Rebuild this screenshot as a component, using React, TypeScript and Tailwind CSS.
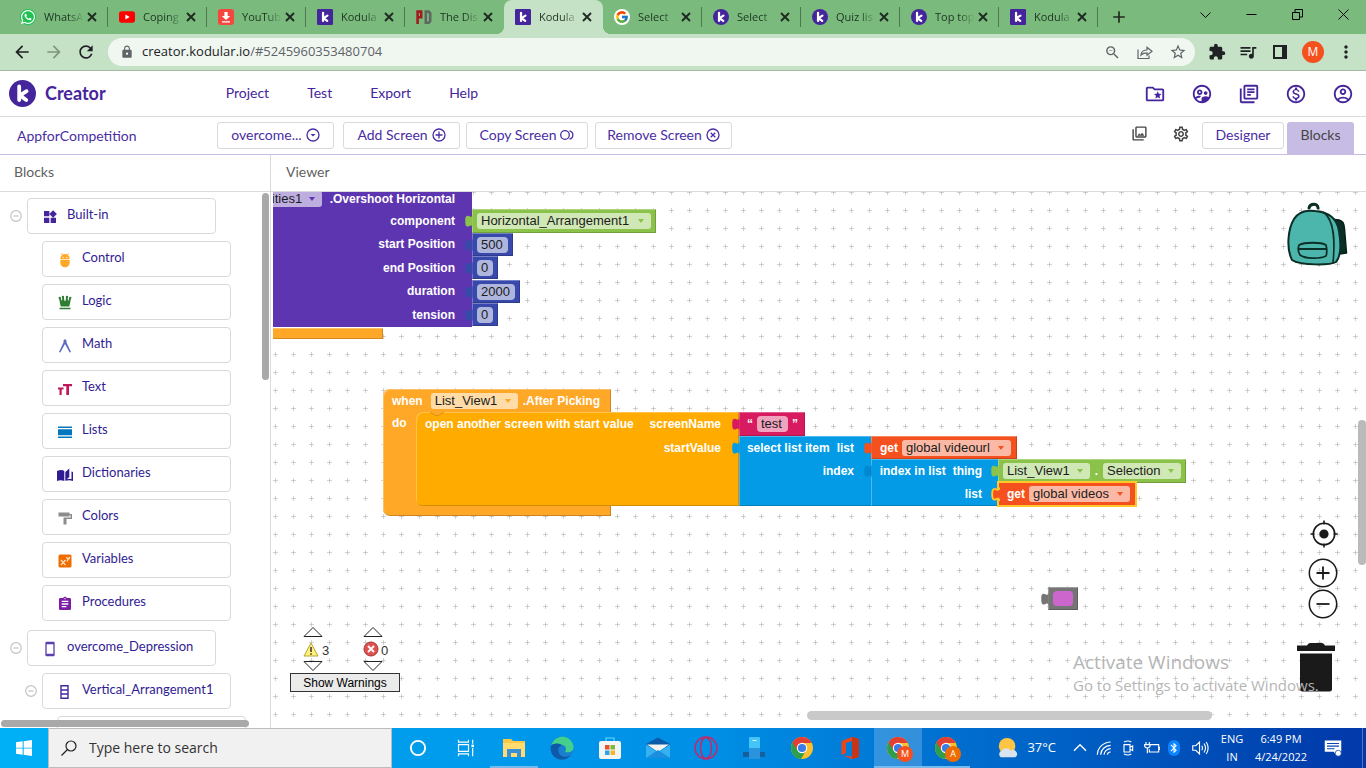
import type { ReactNode } from "react";
import {
  MdAdb,
  MdAdd,
  MdArrowBack,
  MdArrowForward,
  MdAssignment,
  MdExtension,
  MdLock,
  MdMoreVert,
  MdOutlineAccountCircle,
  MdOutlineCollections,
  MdOutlineFolderSpecial,
  MdOutlineLibraryBooks,
  MdOutlineMonetizationOn,
  MdOutlineSettings,
  MdOutlineSupervisedUserCircle,
  MdQueueMusic,
  MdRefresh,
  MdSmartphone,
  MdStarBorder,
  MdWidgets,
  MdZoomOut,
  MdBluetooth,
} from "react-icons/md";
import { FaWhatsapp } from "react-icons/fa";
import { FcGoogle } from "react-icons/fc";

/* ---------- browser chrome ---------- */

function KMark({ round = false, className = "size-4" }: { round?: boolean; className?: string }) {
  return (
    <svg viewBox="0 0 27 27" className={className} aria-hidden="true">
      <rect width="27" height="27" rx={round ? 13.5 : 2} fill="#45259c" />
      <path d="M10.2 6.5v13.6M17.6 11.2l-6.6 4.2 6.2 4.6" fill="none" stroke="#fff" strokeWidth="3.8" strokeLinecap="round" strokeLinejoin="round" />
    </svg>
  );
}

function WhatsappIcon() {
  return (
    <span className="flex size-4 items-center justify-center rounded-full bg-[#1fc152] text-white">
      <FaWhatsapp className="size-4" />
    </span>
  );
}

function YoutubeIcon() {
  return (
    <svg viewBox="0 0 16 16" className="size-4" aria-hidden="true">
      <rect y="2.3" width="16" height="11.4" rx="2.6" fill="#f00" />
      <path d="M6.4 5.5v5l4.3-2.5z" fill="#fff" />
    </svg>
  );
}

function DownloadIcon() {
  return (
    <svg viewBox="0 0 16 16" className="size-4" aria-hidden="true">
      <rect width="16" height="16" rx="3" fill="#f4473f" />
      <path d="M6.4 3h3.2v4h2.6L8 11 3.8 7h2.6zM4 12.2h8v1.2H4z" fill="#fff" />
    </svg>
  );
}

function PdIcon() {
  return (
    <svg viewBox="0 0 16 16" className="size-4" fill="none" strokeWidth="2.6" aria-hidden="true">
      <path d="M1.6 15V2.6h3.6v5.6H2" stroke="#a31b1f" />
      <path d="M9.8 2.6h2.8l1.6 1.6v8l-1.6 1.6H9.8z" stroke="#5d6860" />
    </svg>
  );
}

function GoogleIcon() {
  return (
    <span className="flex size-4 items-center justify-center rounded-full bg-white">
      <FcGoogle className="size-[14px]" />
    </span>
  );
}

const tabs: { title: string; icon: ReactNode; active?: boolean; line?: boolean }[] = [
  { title: "WhatsA", icon: <WhatsappIcon />, line: true },
  { title: "Coping", icon: <YoutubeIcon />, line: true },
  { title: "YouTub", icon: <DownloadIcon />, line: true },
  { title: "Kodula", icon: <KMark />, line: true },
  { title: "The Dis", icon: <PdIcon /> },
  { title: "Kodula", icon: <KMark />, active: true },
  { title: "Select", icon: <GoogleIcon />, line: true },
  { title: "Select", icon: <KMark round />, line: true },
  { title: "Quiz lis", icon: <KMark round />, line: true },
  { title: "Top top", icon: <KMark round />, line: true },
  { title: "Kodula", icon: <KMark />, line: true },
];

function TabStrip() {
  return (
    <div className="flex h-[34px] shrink-0 bg-[#7abb7d] pl-[9px] font-['Open_Sans',sans-serif] text-[11px] text-[#1d3320]">
      {tabs.map((t, i) => (
        <div key={i} className={t.active ? "relative flex w-[99px] items-center rounded-t-lg bg-[#c5e1c6] pl-[11px]" : "relative flex w-[99px] items-center pl-[11px]"}>
          {t.active && (
            <>
              <span className="absolute bottom-0 -left-2 size-2 bg-[radial-gradient(circle_at_0_0,#7abb7d_8px,#c5e1c6_8px)]" />
              <span className="absolute -right-2 bottom-0 size-2 bg-[radial-gradient(circle_at_100%_0,#7abb7d_8px,#c5e1c6_8px)]" />
            </>
          )}
          {t.icon}
          <span className="ml-2 w-[40px] overflow-hidden whitespace-nowrap mask-r-from-60%">{t.title}</span>
          <button aria-label={`Close ${t.title}`} className="flex size-4 items-center justify-center text-[#1f2a20]">
            <svg viewBox="0 0 16 16" className="size-4" stroke="currentColor" strokeWidth="1.9" aria-hidden="true">
              <path d="M4 4l8 8M12 4l-8 8" />
            </svg>
          </button>
          {t.line && <span className="absolute top-[7px] right-0 h-5 w-px bg-[#4e7950]" />}
        </div>
      ))}
      <button aria-label="New tab" className="ml-[11px] text-[#1f2a20]">
        <MdAdd className="size-5" />
      </button>
      <div className="ml-auto flex h-[29px] text-black">
        <WinButton label="Search tabs" d="M.5 3.5l5 5 5-5" />
        <WinButton label="Minimize" d="M.5 5.5h10" />
        <WinButton label="Restore" d="M.5 3.500h7v7h-7zM3 3.500v-3h7.500v7.500H8" />
        <WinButton label="Close window" d="M.5.5l10 10M10.500.5l-10 10" />
      </div>
    </div>
  );
}

function WinButton({ label, d }: { label: string; d: string }) {
  return (
    <button aria-label={label} className="flex w-[46px] items-center justify-center">
      <svg viewBox="0 0 11 11" className="size-[11px]" fill="none" stroke="currentColor" aria-hidden="true">
        <path d={d} />
      </svg>
    </button>
  );
}

function AddressBar() {
  return (
    <div className="flex h-[37px] shrink-0 items-center border-b border-[#a3b8a4] bg-[#c5e1c6] pr-[10px] pl-3 text-[#202124]">
      <div className="flex w-24 items-center gap-3">
        <button aria-label="Back"><MdArrowBack className="size-5" /></button>
        <button aria-label="Forward" className="text-[#7f9580]"><MdArrowForward className="size-5" /></button>
        <button aria-label="Reload"><MdRefresh className="size-5" /></button>
      </div>
      <div className="flex h-7 flex-1 items-center rounded-full bg-[#f0f7f1] pr-2 pl-3 text-[#5f6368]">
        <MdLock className="size-[14px]" />
        <span className="ml-2 flex-1 font-['Open_Sans',sans-serif] text-[13px]">
          <span className="text-[#202124]">creator.kodular.io</span>/#5245960353480704
        </span>
        <div className="flex gap-4">
          <button aria-label="Zoom"><MdZoomOut className="size-[17px]" /></button>
          <button aria-label="Share">
            <svg viewBox="0 0 16 16" className="size-4" fill="none" stroke="currentColor" strokeWidth="1.2" aria-hidden="true">
              <path d="M1 5.500v9h11v-3M4 11c.4-3.500 2.500-5 6-5V3.200L15 7.300l-5 4V8.800C7.500 8.800 5.500 9.500 4 11z" />
            </svg>
          </button>
          <button aria-label="Bookmark"><MdStarBorder className="size-[18px]" /></button>
        </div>
      </div>
      <div className="flex items-center gap-3 pl-[13px]">
        <button aria-label="Extensions"><MdExtension className="size-[18px]" /></button>
        <button aria-label="Media"><MdQueueMusic className="size-5" /></button>
        <button aria-label="Side panel">
          <svg viewBox="0 0 20 20" className="size-5" aria-hidden="true">
            <path d="M3 3h14v14H3zM5 5v10h7V5z" fillRule="evenodd" fill="currentColor" />
          </svg>
        </button>
        <button aria-label="Profile" className="flex size-[22px] items-center justify-center rounded-full bg-[#f4511e] font-['Open_Sans',sans-serif] text-xs text-white">M</button>
        <button aria-label="Menu"><MdMoreVert className="size-5" /></button>
      </div>
    </div>
  );
}

/* ---------- creator header ---------- */

function SiteHeader() {
  return (
    <header className="flex h-[46px] shrink-0 items-center border-b border-[#dcdcdc] pr-3 pl-[9px] text-[#45259c]">
      <KMark round className="size-[27px]" />
      <span className="ml-[9px] pb-[2px] text-lg font-bold">Creator</span>
      <nav className="ml-[120px] flex gap-[38px] pb-[2px] text-sm">
        <a href="#project">Project</a>
        <a href="#test">Test</a>
        <a href="#export">Export</a>
        <a href="#help">Help</a>
      </nav>
      <div className="ml-auto flex gap-[25px]">
        <button aria-label="Projects"><MdOutlineFolderSpecial className="size-[22px]" /></button>
        <button aria-label="Community"><MdOutlineSupervisedUserCircle className="size-[22px]" /></button>
        <button aria-label="Docs"><MdOutlineLibraryBooks className="size-[22px]" /></button>
        <button aria-label="Monetization"><MdOutlineMonetizationOn className="size-[22px]" /></button>
        <button aria-label="Account"><MdOutlineAccountCircle className="size-[22px]" /></button>
      </div>
    </header>
  );
}

function RingIcon({ children }: { children: ReactNode }) {
  return (
    <svg viewBox="0 0 14 14" className="size-[14px]" fill="none" stroke="currentColor" strokeWidth="1.3" aria-hidden="true">
      {children}
    </svg>
  );
}

function ScreenToolbar() {
  const btn = "flex h-[27px] items-center justify-center gap-1 rounded-[3px] border border-[#d9d9d9] pb-[2px]";
  return (
    <div className="flex h-[38px] shrink-0 items-center border-b border-[#c7bde4] pr-3 pl-[17px] text-sm text-[#4a2ea3]">
      <span className="w-[200px]">AppforCompetition</span>
      <button className={`${btn} w-[117px]`}>
        overcome...
        <RingIcon><circle cx="7" cy="7" r="6" /><path d="M4.500 6h5L7 8.500z" fill="currentColor" stroke="none" /></RingIcon>
      </button>
      <button className={`${btn} ml-[9px] w-[117px]`}>
        Add Screen
        <RingIcon><circle cx="7" cy="7" r="6" /><path d="M7 3.500v7M3.500 7h7" /></RingIcon>
      </button>
      <button className={`${btn} ml-[6px] w-[122px]`}>
        Copy Screen
        <RingIcon><circle cx="5" cy="7" r="4.300" /><path d="M9.500 2.800c4.500 1.200 4.500 7.200 0 8.400" /></RingIcon>
      </button>
      <button className={`${btn} ml-[7px] w-[137px]`}>
        Remove Screen
        <RingIcon><circle cx="7" cy="7" r="6" /><path d="M4.700 4.700l4.600 4.600M9.300 4.700L4.700 9.300" /></RingIcon>
      </button>
      <div className="ml-auto flex items-center self-stretch">
        <button aria-label="Assets" className="mr-6 pb-1 text-[#444]"><MdOutlineCollections className="size-[17px]" /></button>
        <button aria-label="Settings" className="mr-3 pb-1 text-[#444]"><MdOutlineSettings className="size-[18px]" /></button>
        <button className={`${btn} mr-[3px] w-[82px]`}>Designer</button>
        <button className="mt-[5px] w-[67px] self-stretch rounded-t-[3px] bg-[#c7bde4] pb-[6px] text-[#444]">Blocks</button>
      </div>
    </div>
  );
}

/* ---------- block palette ---------- */

function Glyph({ color, children }: { color: string; children: ReactNode }) {
  return (
    <svg viewBox="0 0 16 16" className="size-4" fill={color} aria-hidden="true">
      {children}
    </svg>
  );
}

const drawers: { name: string; icon: ReactNode }[] = [
  { name: "Control", icon: <MdAdb className="size-4 text-[#ffa726]" /> },
  { name: "Logic", icon: <Glyph color="#2e7d32"><circle cx="2.800" cy="3" r="1.200" /><circle cx="6" cy="2" r="1.200" /><circle cx="10" cy="2" r="1.200" /><circle cx="13.200" cy="3" r="1.200" /><path d="M2 3.500h1.500L5 6l.4-4h1.400l.7 4h1l.7-4h1.400L11 6l1.500-2.500H14L12.300 11.500H3.700zM2.500 12.800h11v1.500h-11z" /></Glyph> },
  { name: "Math", icon: <Glyph color="#5c6bc0"><path d="M8 1l1.500 1.500v2L14 14l-1.300.5L8 6l-4.700 8.500L2 14 6.500 4.500v-2z" /></Glyph> },
  { name: "Text", icon: <Glyph color="#c2185b"><path d="M6 3h9v2.300h-3V14H9.300V5.300H6zM1 6.500h5.500v2H4.700V14H2.500V8.500H1z" /></Glyph> },
  { name: "Lists", icon: <Glyph color="#0277bd"><path d="M1 2.500h14V4H1zM1 5.300h14v6H1zM1 12.500h14V14H1z" /></Glyph> },
  { name: "Dictionaries", icon: <Glyph color="#311b92"><path d="M0 4c3-1.200 5.500-1.200 7.300 0v10C5 13 2.500 13 0 14zM8.300 13.800V5l4-3.500V10l-2.500 2.200c2-.4 3.500-.4 4.700 0V4.500l1.500.5v9c-2.500-1-5-1-7.700-.2z" /></Glyph> },
  { name: "Colors", icon: <Glyph color="#8c8c8c"><path d="M1.500 2.500h11V4H15v5H9.500v5.500h-3V7.500h7V5.200h-1v1.300h-11z" /></Glyph> },
  { name: "Variables", icon: <Glyph color="#ef6c00"><rect x="1.500" y="1.500" width="13" height="13" rx="1.500" /><path d="M4 7l4.500 5M8.500 7L4 12M9.500 4l1.600 2.500L13 4M11.100 6.500L10 8.500" fill="none" stroke="#ffe0c2" strokeWidth="1.300" /></Glyph> },
  { name: "Procedures", icon: <MdAssignment className="size-4 text-[#7b1fa2]" /> },
];

function DrawerButton({ icon, children }: { icon: ReactNode; children: ReactNode }) {
  return (
    <button className="flex h-9 w-[189px] shrink-0 items-center rounded-[4px] border border-[#d9d9d9] bg-white pb-[2px] pl-[14px] text-[13px] text-[#311b92]">
      <span className="mt-1">{icon}</span>
      <span className="ml-[9px]">{children}</span>
    </button>
  );
}

function Collapse() {
  return (
    <button aria-label="Collapse" className="mr-[5px] text-[#c4c4c4]">
      <svg viewBox="0 0 12 12" className="size-3" fill="none" stroke="currentColor" strokeWidth="1.200" aria-hidden="true">
        <circle cx="6" cy="6" r="5.300" />
        <path d="M3.300 6h5.400" />
      </svg>
    </button>
  );
}

function Palette() {
  return (
    <aside className="relative flex w-[271px] shrink-0 flex-col overflow-hidden border-r border-[#d9d9d9]">
      <h2 className="h-[37px] shrink-0 border-b border-[#dcdcdc] pt-[7px] pl-[14px] text-sm text-[#616161]">Blocks</h2>
      <div className="flex min-h-0 flex-1 flex-col gap-[9px] overflow-hidden pt-[6px]">
        <section className="flex shrink-0 flex-col gap-[7px]">
          <div className="flex items-center pl-[10px]">
            <Collapse />
            <DrawerButton icon={<MdWidgets className="size-4 text-[#45259c]" />}>Built-in</DrawerButton>
          </div>
          {drawers.map((d) => (
            <div key={d.name} className="flex pl-[42px]">
              <DrawerButton icon={d.icon}>{d.name}</DrawerButton>
            </div>
          ))}
        </section>
        <section className="flex shrink-0 flex-col gap-[7px]">
          <div className="flex items-center pl-[10px]">
            <Collapse />
            <DrawerButton icon={<MdSmartphone className="size-4 text-[#5e3fb0]" />}>overcome_Depression</DrawerButton>
          </div>
          <div className="flex items-center pl-[25px]">
            <Collapse />
            <DrawerButton
              icon={<Glyph color="none"><path d="M4 1.700h7v12.600H4zM4 6h7M4 10h7" stroke="#4527a0" strokeWidth="1.400" /></Glyph>}
            >
              Vertical_Arrangement1
            </DrawerButton>
          </div>
          <div className="ml-[57px] h-9 w-[189px] rounded-[4px] border border-[#d9d9d9]" />
        </section>
      </div>
      <div className="absolute top-[38px] right-[1px] h-[187px] w-[7px] rounded-full bg-[#a9a9a9]" />
      <div className="absolute bottom-[1px] left-[1px] h-[7px] w-[248px] rounded-full bg-[#a9a9a9]" />
    </aside>
  );
}

/* ---------- workspace blocks ---------- */

function Plug({ className }: { className: string }) {
  return (
    <svg viewBox="-8 5 8 15" className={`absolute top-[5px] -left-[7px] h-[14px] w-2 ${className}`} aria-hidden="true">
      <path d="M0 5.500c-1 4.500-3.500 1.500-5.500 1.500-2.300 0-2.500 2.500-2.500 5.500s.2 6 2.500 6c2 0 4.500-3.500 5.500 1.500z" fill="currentColor" />
    </svg>
  );
}

const edge = "shadow-[inset_1px_1px_0_rgba(255,255,255,0.3),inset_-1px_-1px_0_rgba(0,0,0,0.18)]";

function Pick({ label, value, className, arrow }: { label: string; value: string; className: string; arrow: string }) {
  return (
    <span className={`relative flex h-4 shrink-0 rounded-[3px] bg-white/60 ${className}`}>
      <select aria-label={label} defaultValue={value} className="w-full appearance-none bg-transparent pl-1 text-[13px] leading-4 font-normal text-[#1c1c1c]">
        <option>{value}</option>
      </select>
      <svg viewBox="0 0 6 4" className={`pointer-events-none absolute top-[6px] right-[7px] h-1 w-[6px] ${arrow}`} aria-hidden="true">
        <path d="M0 0h6L3 4z" fill="currentColor" />
      </svg>
    </span>
  );
}

function Field({ label, value, className }: { label: string; value: string; className: string }) {
  return <input aria-label={label} defaultValue={value} className={`h-4 rounded-[4px] bg-white/60 pl-1 text-[13px] font-normal text-[#1c1c1c] ${className}`} />;
}

function NumberBlock({ label, value, place, field }: { label: string; value: string; place: string; field: string }) {
  return (
    <div className={`absolute flex h-[23px] items-center bg-[#3949ab] pl-[5px] ${edge} ${place}`}>
      <Plug className="text-[#3949ab]" />
      <Field label={label} value={value} className={field} />
    </div>
  );
}

function Blocks() {
  return (
    <div className="font-['Liberation_Sans',Arial,sans-serif] text-xs font-bold whitespace-nowrap text-white">
      <div className={`absolute top-[136px] -left-1 h-[11px] w-[114px] bg-[#ffa726] ${edge}`} />
      <div className="absolute top-0 left-0 flex h-[135px] w-[199px] flex-col items-end overflow-hidden bg-[#5e35b1] pr-[17px]">
        <div className="flex h-[17px] items-center self-stretch pb-[4px]">
          <span className="-ml-6 flex min-w-0 flex-1">
            <Pick label="Component" value="Utilities1" className="w-[73px]" arrow="text-[#5e35b1]" />
          </span>
          <span>.Overshoot Horizontal</span>
        </div>
        <span className="flex h-[23px] items-center">component</span>
        <span className="flex h-6 items-center">start Position</span>
        <span className="flex h-[23px] items-center">end Position</span>
        <span className="flex h-6 items-center">duration</span>
        <span className="flex h-[23px] items-center">tension</span>
      </div>
      <div className={`absolute top-[17px] left-[199px] flex h-6 w-[184px] items-center bg-[#8bc34a] pl-[5px] ${edge}`}>
        <Plug className="text-[#8bc34a]" />
        <Pick label="Arrangement" value="Horizontal_Arrangement1" className="w-[174px]" arrow="text-[#8bc34a]" />
      </div>
      <NumberBlock label="Start position" value="500" place="top-[41px] left-[199px] w-[41px]" field="w-[31px]" />
      <NumberBlock label="End position" value="0" place="top-[64px] left-[199px] w-[26px]" field="w-4" />
      <NumberBlock label="Duration" value="2000" place="top-[88px] left-[199px] w-12" field="w-[38px]" />
      <NumberBlock label="Tension" value="0" place="top-[111px] left-[199px] w-[26px]" field="w-4" />

      <div className="absolute top-[197px] left-[110px] h-[127px] w-10 rounded-l-[7px] bg-[#ffa726] pt-[24px] pl-[9px] leading-5 shadow-[inset_1px_0_0_rgba(255,255,255,0.3),inset_0_-1px_0_rgba(0,0,0,0.18)]">do</div>
      <div className="absolute top-[197px] left-[110px] flex h-[23px] w-[228px] items-center rounded-tl-[7px] bg-[#ffa726] pl-[9px] shadow-[inset_1px_1px_0_rgba(255,255,255,0.3),inset_-1px_0_0_rgba(0,0,0,0.18)]">
        when
        <Pick label="Event source" value="List_View1" className="mr-[5px] ml-2 w-[87px]" arrow="text-[#ffa726]" />
        .After Picking
      </div>
      <div className="absolute top-[313px] left-[118px] h-[11px] w-[220px] border-r border-b border-black/20 bg-[#ffa726]" />

      <div className={`absolute top-[220px] left-[143px] flex h-[94px] w-[323px] flex-col rounded-l-[7px] bg-[#ffab00] pr-[18px] pl-[9px] ${edge}`}>
        <svg viewBox="0 0 14 4" className="absolute top-0 left-[14px] h-1 w-[14px]" aria-hidden="true">
          <path d="M0 0l5.500 4h3L14 0z" fill="#ffa726" />
          <path d="M0 0l5.500 3.500h3L14 0" fill="none" stroke="#d48a10" strokeWidth=".8" />
        </svg>
        <div className="flex h-6 items-center justify-between"><span>open another screen with start value</span><span>screenName</span></div>
        <div className="flex h-[23px] items-center justify-end">startValue</div>
      </div>

      <div className={`absolute top-[220px] left-[466px] flex h-6 w-[66px] items-center bg-[#d81b60] pl-2 ${edge}`}>
        <Plug className="text-[#d81b60]" />
        “<Field label="Text" value="test" className="mx-1 w-[31px]" />”
      </div>
      <div className={`absolute top-[244px] left-[466px] flex h-[70px] w-[133px] flex-col items-end bg-[#039be5] pr-[18px] ${edge}`}>
        <Plug className="text-[#039be5]" />
        <span className="flex h-[23px] items-center gap-[7px]"><span>select list item</span><span>list</span></span>
        <span className="flex h-[23px] items-center">index</span>
      </div>
      <div className={`absolute top-[244px] left-[598px] flex h-[23px] w-[146px] items-center bg-[#f4511e] pl-[9px] ${edge}`}>
        <Plug className="text-[#f4511e]" />
        get
        <Pick label="Variable" value="global videourl" className="ml-1 w-[109px]" arrow="text-[#f4511e]" />
      </div>
      <div className={`absolute top-[267px] left-[598px] flex h-[47px] w-[128px] flex-col items-end bg-[#039be5] pr-[17px] ${edge}`}>
        <Plug className="text-[#0288d1]" />
        <span className="flex h-[23px] items-center gap-[7px]"><span>index in list</span><span>thing</span></span>
        <span className="flex h-[23px] items-center">list</span>
      </div>
      <div className={`absolute top-[267px] left-[725px] flex h-6 w-[188px] items-center bg-[#8bc34a] pl-[5px] ${edge}`}>
        <Plug className="text-[#8bc34a]" />
        <Pick label="Component" value="List_View1" className="w-[87px]" arrow="text-[#8bc34a]" />
        <span className="mx-auto">.</span>
        <Pick label="Property" value="Selection" className="mr-[5px] w-[78px]" arrow="text-[#8bc34a]" />
      </div>
      <div className="absolute top-[289px] left-[724px] flex h-[26px] w-[140px] items-center border-2 border-[#ffc72c] bg-[#f4511e] pl-2">
        <svg viewBox="-10 4 10 17" className="absolute top-[3px] -left-[9px] h-[16px] w-[10px]" aria-hidden="true">
          <path d="M0 5.500c-1 4.500-3.500 1.500-5.500 1.500-2.300 0-2.500 2.500-2.500 5.500s.2 6 2.500 6c2 0 4.500-3.500 5.500 1.500" fill="#f4511e" stroke="#ffc72c" strokeWidth="2" />
        </svg>
        get
        <Pick label="Variable" value="global videos" className="ml-1 w-[101px]" arrow="text-[#f4511e]" />
      </div>

      <div className={`absolute top-[395px] left-[775px] flex h-[23px] w-[30px] items-center bg-[#757575] pl-[5px] ${edge}`}>
        <Plug className="text-[#757575]" />
        <button aria-label="Pick colour" className="h-[15px] w-5 rounded-[4px] bg-[#cc66cc]" />
      </div>
    </div>
  );
}

function Backpack() {
  return (
    <svg viewBox="0 0 96 90" className="absolute top-0 right-0 h-[90px] w-24" strokeLinejoin="round" strokeLinecap="round" aria-hidden="true">
      <path d="M60 27l9 1c4 1 5 3 5.500 9l2 24-7 1-2-21c-.5-5-2-6-6-7" fill="#0b2e26" stroke="#06211b" strokeWidth="1.500" />
      <path d="M39 16c1-5 9-5 9 0" fill="none" stroke="#0b2e26" strokeWidth="3" />
      <path d="M22 68c-6-12-4-31 2-41 5-8 14-9 21-8 12 1 22 6 24 20 2 12 3 24-3 31-5 3-35 4-44-2z" fill="#4db6ac" stroke="#0b2e26" strokeWidth="2" />
      <path d="M53 20c12 8 12 30 10 51" fill="none" stroke="#0b2e26" strokeWidth="1.600" />
      <path d="M29 53c6-3 22-3 27 0 1 4 1 8 0 11-6 3-21 3-26-1-2-3-2-7-1-10zM29 57h27" fill="none" stroke="#0b2e26" strokeWidth="1.800" />
    </svg>
  );
}

function Arrow({ down = false }: { down?: boolean }) {
  return (
    <svg viewBox="0 0 20 10" className="h-[10px] w-5" fill="none" stroke="#222" aria-hidden="true">
      <path d={down ? "M1 .5h18L10 9.500z" : "M1 9.500h18L10 .5z"} />
    </svg>
  );
}

function Warnings() {
  return (
    <div className="absolute bottom-9 left-[17px] w-[110px] font-['Liberation_Sans',Arial,sans-serif] text-[13px] text-[#333]">
      <div className="flex gap-10 pl-[13px]">
        <div className="flex w-5 flex-col gap-1">
          <button aria-label="Previous warning" className="h-[10px]"><Arrow /></button>
          <span className="flex h-4 items-center gap-[3px]">
            <svg viewBox="0 0 16 15" className="h-[15px] w-4 shrink-0" aria-hidden="true">
              <path d="M8 1l7 13H1z" fill="#fff27a" stroke="#b8a33a" strokeLinejoin="round" />
              <path d="M8 5v5M8 11.300v1.400" stroke="#333" strokeWidth="1.500" />
            </svg>
            <span className="pt-1">3</span>
          </span>
          <button aria-label="Next warning" className="h-[10px]"><Arrow down /></button>
        </div>
        <div className="flex w-5 flex-col gap-1">
          <button aria-label="Previous error" className="h-[10px]"><Arrow /></button>
          <span className="flex h-4 items-center gap-[2px]">
            <svg viewBox="0 0 16 16" className="size-4 shrink-0" aria-hidden="true">
              <circle cx="8" cy="8" r="7" fill="#e05252" stroke="#a83232" />
              <path d="M5 5l6 6M11 5l-6 6" stroke="#fff" strokeWidth="1.800" />
            </svg>
            <span className="pt-1">0</span>
          </span>
          <button aria-label="Next error" className="h-[10px]"><Arrow down /></button>
        </div>
      </div>
      <button className="mt-[2px] h-[19px] w-full border border-[#333] bg-[#ebebeb] text-xs text-black">Show Warnings</button>
    </div>
  );
}

function CanvasControls() {
  return (
    <div className="absolute right-[28px] bottom-[36px] flex w-[41px] flex-col items-end text-[#1a1a1a]">
      <button aria-label="Center">
        <svg viewBox="0 0 28 28" className="size-7" fill="none" stroke="currentColor" strokeWidth="1.600" aria-hidden="true">
          <circle cx="14" cy="14" r="10.700" />
          <circle cx="14" cy="14" r="3.800" fill="currentColor" />
          <path d="M14 .5v4M14 23.500v4M.5 14h4M23.500 14h4" />
        </svg>
      </button>
      <button aria-label="Zoom in" className="mt-[10px]">
        <svg viewBox="0 0 30 30" className="size-[30px]" fill="none" stroke="currentColor" strokeWidth="1.500" aria-hidden="true">
          <circle cx="15" cy="15" r="13.700" />
          <path d="M15 8.500v13M8.500 15h13" strokeWidth="1.800" />
        </svg>
      </button>
      <button aria-label="Zoom out" className="mt-px">
        <svg viewBox="0 0 30 30" className="size-[30px]" fill="none" stroke="currentColor" strokeWidth="1.500" aria-hidden="true">
          <circle cx="15" cy="15" r="13.700" />
          <path d="M8.500 15h13" strokeWidth="1.800" />
        </svg>
      </button>
      <button aria-label="Trash" className="mt-6 self-start">
        <svg viewBox="0 0 38 49" className="h-[49px] w-[38px]" fill="currentColor" aria-hidden="true">
          <path d="M0 2.500h10Q11 0 13 0h12q2 0 3 2.500h10V8H0zM3 10.500h32V46q0 2.500-2.500 2.500h-27Q3 48.500 3 46z" />
        </svg>
      </button>
    </div>
  );
}

function Viewer() {
  return (
    <main className="flex min-w-0 flex-1 flex-col">
      <h2 className="h-[37px] shrink-0 border-b border-[#dcdcdc] pt-[7px] pl-[15px] text-sm text-[#616161]">Viewer</h2>
      <div className="relative ml-[2px] min-h-0 flex-1 overflow-hidden">
        <svg className="absolute inset-0 size-full" aria-hidden="true">
          <defs>
            <pattern id="grid" width="18" height="18" patternUnits="userSpaceOnUse" x="-7" y="-9">
              <path d="M7 9.500h5M9.500 7v5" stroke="#d2d2d2" />
              <path d="M9 9.500h1" stroke="#bdbdbd" />
            </pattern>
          </defs>
          <rect width="100%" height="100%" fill="url(#grid)" />
        </svg>
        <Blocks />
        <Backpack />
        <Warnings />
        <CanvasControls />
        <div className="absolute right-[154px] bottom-2 h-[9px] w-[405px] rounded-full bg-[#c9c9c9]" />
        <div className="absolute top-[228px] right-0 h-[145px] w-2 rounded-full bg-[#bababa]" />
        <div className="pointer-events-none absolute right-[56px] bottom-[32px] w-[237px] font-['Open_Sans',sans-serif] whitespace-nowrap text-[#b5b5b5]">
          <p className="text-[19px] leading-6">Activate Windows</p>
          <p className="text-[15px] leading-[22px]">Go to Settings to activate Windows.</p>
        </div>
      </div>
    </main>
  );
}

/* ---------- taskbar ---------- */

function ChromeIcon({ badge, color }: { badge?: string; color?: string }) {
  return (
    <span className="relative block size-6">
      <svg viewBox="0 0 24 24" className="size-6" aria-hidden="true">
        <circle cx="12" cy="12" r="11" fill="#fbc02d" />
        <path d="M12 12L2.500 6.500A11 11 0 0 0 11 23l5-8.500z" fill="#2e9e4b" />
        <path d="M12 7h9.800A11 11 0 0 0 2.500 6.500L7.500 14.500z" fill="#e23f33" />
        <circle cx="12" cy="12" r="5.200" fill="#fff" />
        <circle cx="12" cy="12" r="4.100" fill="#3b7de8" />
      </svg>
      {badge && <span className={`absolute -right-[3px] -bottom-[2px] flex size-4 items-center justify-center rounded-full text-[9px] text-white ${color}`}>{badge}</span>}
    </span>
  );
}

function TaskButton({ label, active, open, children }: { label: string; active?: boolean; open?: boolean; children: ReactNode }) {
  return (
    <button
      aria-label={label}
      className={`flex h-10 w-12 items-center justify-center ${active ? "bg-white/20" : ""} ${active || open ? "shadow-[inset_0_-2px_0_#76b9ed]" : ""}`}
    >
      {children}
    </button>
  );
}

function Draw({ children, className = "size-6" }: { children: ReactNode; className?: string }) {
  return (
    <svg viewBox="0 0 24 24" className={className} fill="none" aria-hidden="true">
      {children}
    </svg>
  );
}

function Taskbar() {
  return (
    <footer className="flex h-10 shrink-0 bg-linear-to-r from-[#00b0f6] via-[#008fe6] via-52% to-[#0337a8] font-['Open_Sans',sans-serif] text-white">
      <TaskButton label="Start">
        <Draw className="size-4"><path d="M0 3.400L10 2v9.500H0zM11.500 1.800L24 0v11.500H11.500zM0 12.800h10v9.400L0 20.800zM11.500 12.800H24V24l-12.500-1.700z" fill="#fff" /></Draw>
      </TaskButton>
      <label className="mr-[2px] flex w-[344px] items-center border border-[#bdbdbd] bg-[#f1f1f1] pl-3 text-[#333]">
        <svg viewBox="0 0 16 16" className="size-4" fill="none" stroke="#222" strokeWidth="1.200" aria-hidden="true">
          <circle cx="10" cy="6" r="5" />
          <path d="M6.500 9.500L.5 15.500" />
        </svg>
        <input aria-label="Search" placeholder="Type here to search" className="ml-3 min-w-0 flex-1 bg-transparent text-sm outline-none placeholder:text-[#333]" />
      </label>
      <TaskButton label="Cortana"><Draw className="size-[18px]"><circle cx="12" cy="12" r="9.500" stroke="#fff" strokeWidth="2.500" /></Draw></TaskButton>
      <TaskButton label="Task view">
        <Draw className="size-5"><path d="M3 2v3h12V2M3 22v-3h12v3M3 8h12v8H3zM20 2v5M20 12v10" stroke="#fff" strokeWidth="1.400" /><rect x="18.500" y="8" width="3" height="3" fill="#fff" /></Draw>
      </TaskButton>
      <TaskButton label="File Explorer" open>
        <Draw><path d="M1 3h8l2 2h12v16H1z" fill="#f9c846" /><path d="M1 7h22v14H1z" fill="#ffdb70" /><path d="M5 21v-8h14v8h-4v-4H9v4z" fill="#3a8fd8" /></Draw>
      </TaskButton>
      <TaskButton label="Edge">
        <Draw>
          <circle cx="12" cy="12" r="11.500" fill="#1b7fd0" />
          <path d="M1 10C3 2 10 0 14 .8 20 2 24 7 23.500 12c-.5 4-5 5-8.500 4 1.500-2 1.500-5-1-6.500C9 7 3 7.500 1 10z" fill="#43d08c" />
          <path d="M.8 10C4 6.500 10 7 12 9.500 8 10 7 15 10 18.500c2.500 3 7 3 11 .5-4 5.500-11 5.500-15 3C2 19.500 0 15 .8 10z" fill="#0f5aa8" />
        </Draw>
      </TaskButton>
      <TaskButton label="Store">
        <Draw><path d="M8 6V2h8v4" stroke="#3fc6f3" strokeWidth="1.600" /><rect x="1" y="5" width="22" height="18" rx="2" fill="#f5f5f5" /><path d="M7 9h4.500v4.500H7z" fill="#e8512d" /><path d="M12.500 9H17v4.500h-4.500z" fill="#7eb93c" /><path d="M7 14.500h4.500V19H7z" fill="#2fa3e8" /><path d="M12.500 14.500H17V19h-4.500z" fill="#f7b52b" /></Draw>
      </TaskButton>
      <TaskButton label="Mail">
        <Draw><path d="M0 8l12-6.500L24 8v3H0z" fill="#0b5ba8" /><path d="M1 8.500h22L12 16z" fill="#f3f3f3" /><path d="M0 8.500L12 17l12-8.500V22H0z" fill="#35b1f1" /><path d="M0 22L12 14l12 8z" fill="#1b8fdd" /></Draw>
      </TaskButton>
      <TaskButton label="Opera GX">
        <Draw><circle cx="12" cy="12" r="11" stroke="#c2286a" strokeWidth="1.500" /><ellipse cx="12" cy="12" rx="5.500" ry="10.500" stroke="#c2286a" strokeWidth="1.500" /></Draw>
      </TaskButton>
      <TaskButton label="Your Phone">
        <Draw><rect x="7" y="1" width="11" height="16" rx="1" fill="#45c4f7" /><path d="M1 16h22v5H1z" fill="#155f9e" /><path d="M7 12h11v11H7z" fill="#2a93dd" /><path d="M10.500 4.500h4" stroke="#dff" /></Draw>
      </TaskButton>
      <TaskButton label="Chrome"><ChromeIcon /></TaskButton>
      <TaskButton label="Office">
        <Draw><path d="M14 1l7 2v18l-7 2-9-3.500 9 1V5L8 7v10l-4.500 2V5z" fill="#e8471c" /><path d="M14 1l7 2v18l-7 2z" fill="#c73418" /></Draw>
      </TaskButton>
      <TaskButton label="Chrome M" active><ChromeIcon badge="M" color="bg-[#f4511e]" /></TaskButton>
      <TaskButton label="Chrome A" open><ChromeIcon badge="A" color="bg-[#ef6c00]" /></TaskButton>

      <div className="ml-auto flex items-center">
        <button className="mr-4 flex items-center gap-2 text-[13px]">
          <Draw className="size-[22px]"><circle cx="11" cy="10" r="9" fill="#fdc543" /><path d="M4 22a4 4 0 0 1 1-7 6 6 0 0 1 10 0 3.800 3.800 0 0 1 5 7z" fill="#d9e4f2" /></Draw>
          37°C
        </button>
        <div className="flex items-center gap-2">
          <Draw className="size-4"><path d="M3 16l9-9 9 9" stroke="#fff" strokeWidth="2" /></Draw>
          <Draw className="size-4"><path d="M2 22A20 20 0 0 1 22 3M7 22A15 15 0 0 1 22 8M12 22a10 10 0 0 1 10-9M17 22a5 5 0 0 1 5-4" stroke="#fff" strokeWidth="1.800" /></Draw>
          <Draw className="size-4"><path d="M6 7h9v11H6zM15 11l4-2v7l-4-2M6 3c4-2 8-2 11 0M6 21c4 2 8 2 11 0" stroke="#fff" strokeWidth="1.700" /></Draw>
          <Draw className="size-4"><path d="M9 7h13v11H8v-4M22 11h2v3h-2M3 3v4M8 3v4M1 7h8v3q-4 4-8 0zM5 12v8" stroke="#fff" strokeWidth="1.700" /></Draw>
          <span className="flex h-4 w-3 items-center justify-center rounded-full bg-[#0a84ff]"><MdBluetooth className="size-3" /></span>
          <Draw className="ml-1 size-[18px]"><path d="M1 9h4l5-5v16l-5-5H1zM13 9q2 3 0 6M16 6q4 6 0 12M19 4q5 8 0 16" stroke="#fff" strokeWidth="1.500" /></Draw>
        </div>
        <div className="ml-2 w-7 text-center text-[11px] leading-[18px]"><p>ENG</p><p>IN</p></div>
        <div className="ml-2 w-[54px] text-center text-[11px] leading-[18px] whitespace-nowrap"><p>6:49 PM</p><p>4/24/2022</p></div>
        <button aria-label="Notifications" className="mr-5 ml-4">
          <Draw className="size-[18px]"><path d="M1 2h22v15h-4l-3 4-3-4H1z" fill="#fff" /><path d="M4 6h16M4 9.500h16M4 13h10" stroke="#0a45b0" strokeWidth="1.500" /><circle cx="19" cy="19" r="4" fill="#fff" stroke="#0a45b0" /></Draw>
        </button>
        <span className="mr-[3px] h-10 w-px bg-white/30" />
      </div>
    </footer>
  );
}

export default function App() {
  return (
    <div className="flex h-screen flex-col overflow-hidden bg-white font-['Lato',sans-serif]">
      <TabStrip />
      <AddressBar />
      <SiteHeader />
      <ScreenToolbar />
      <div className="flex min-h-0 flex-1">
        <Palette />
        <Viewer />
      </div>
      <Taskbar />
    </div>
  );
}
